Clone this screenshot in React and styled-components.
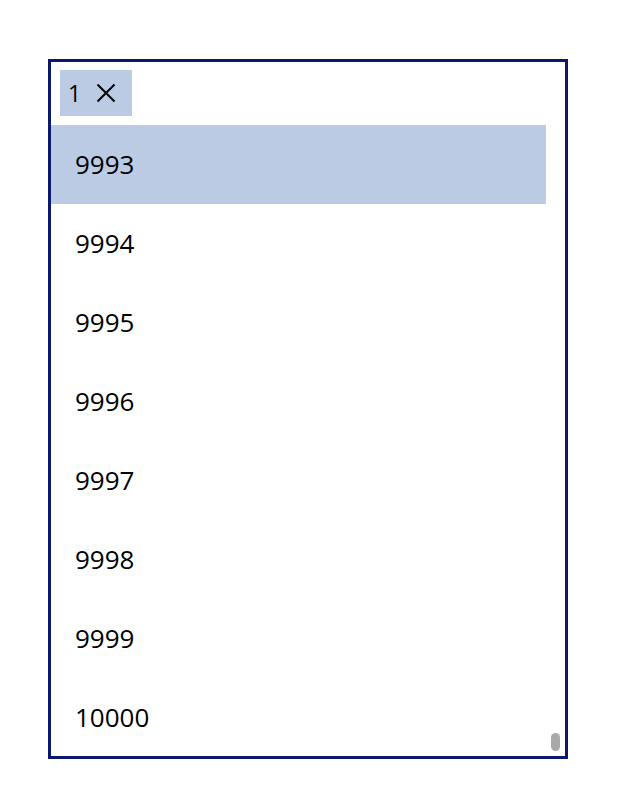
import React from "react";
import styled, { createGlobalStyle } from "styled-components";

const Global = createGlobalStyle`
  html, body { margin: 0; padding: 0; background: #fff; }
  body { font-family: "Open Sans", "Noto Sans", sans-serif; }
`;

const Page = styled.div`
  padding: 59px 0 0 48px;
`;

const Box = styled.div`
  box-sizing: border-box;
  width: 520px;
  height: 700px;
  border: 3px solid #0a1870;
  display: flex;
  flex-direction: column;
  background: #fff;
`;

const Header = styled.div`
  box-sizing: border-box;
  height: 63px;
  padding: 8px 9px;
  display: flex;
  align-items: flex-start;
  flex: none;
`;

const Chip = styled.div`
  box-sizing: border-box;
  height: 46px;
  width: 72px;
  background: #bccbe4;
  display: flex;
  align-items: center;
  padding-left: 8px;
  gap: 15px;
  font-size: 23px;
  color: #000;
`;

const ChipClose = styled.span`
  display: flex;
  align-items: center;
`;

const ListArea = styled.div`
  flex: 1;
  min-height: 0;
  display: flex;
  overflow: hidden;
`;

const Rows = styled.div`
  flex: 1;
  display: flex;
  flex-direction: column;
`;

const Row = styled.div`
  box-sizing: border-box;
  flex: 1;
  display: flex;
  align-items: center;
  padding-left: 24px;
  font-size: 26px;
  color: #000;
  background: ${(p) => (p.$active ? "#bccbe4" : "#fff")};
`;

const Track = styled.div`
  width: 19px;
  flex: none;
  display: flex;
  flex-direction: column;
  justify-content: flex-end;
  align-items: flex-start;
  padding: 0 0 5px 5px;
  box-sizing: border-box;
`;

const Thumb = styled.div`
  width: 9px;
  height: 18px;
  border-radius: 5px;
  background: #a8a8a8;
`;

const items = [9993, 9994, 9995, 9996, 9997, 9998, 9999, 10000];

export default function App() {
  return (
    <Page>
      <Global />
      <Box>
        <Header>
          <Chip>
            <span>1</span>
            <ChipClose>
              <svg width="20" height="20" viewBox="0 0 20 20">
                <path d="M1.5 1.5 L18.5 18.5 M18.5 1.5 L1.5 18.5" stroke="#000" strokeWidth="2" fill="none" />
              </svg>
            </ChipClose>
          </Chip>
        </Header>
        <ListArea>
          <Rows>
            {items.map((n) => (
              <Row key={n} $active={n === 9993}>
                {n}
              </Row>
            ))}
          </Rows>
          <Track>
            <Thumb />
          </Track>
        </ListArea>
      </Box>
    </Page>
  );
}
